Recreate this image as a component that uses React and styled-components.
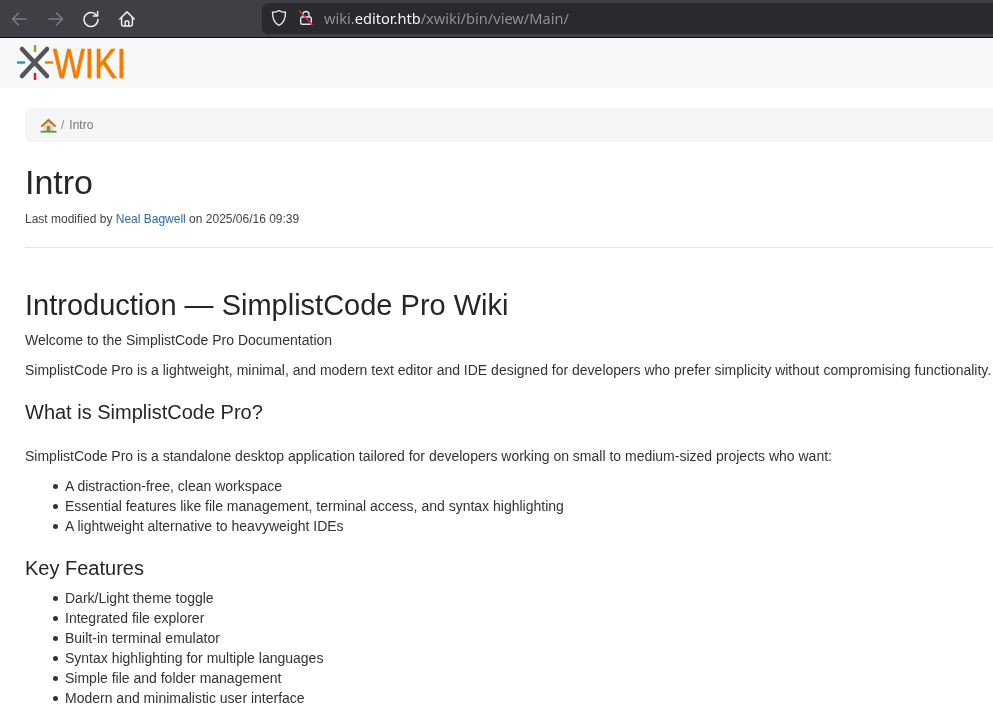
import React from "react";
import styled, { createGlobalStyle } from "styled-components";

const GlobalStyle = createGlobalStyle`
  html, body {
    margin: 0;
    padding: 0;
    height: 721px;
    overflow: hidden;
    background: #fff;
  }
  * { box-sizing: border-box; }
`;

const Page = styled.div`
  width: 993px;
  height: 721px;
  overflow: hidden;
  will-change: transform;
  font-family: "Liberation Sans", Arial, sans-serif;
  font-size: 14px;
  line-height: 20px;
  color: #333;
`;

const Toolbar = styled.div`
  height: 38px;
  display: flex;
  align-items: center;
  background: #3f3f46;
  border-bottom: 1px solid #0c0c0d;
  padding-left: 10px;
`;

const NavButton = styled.span`
  display: flex;
  width: 18px;
  height: 18px;
  margin-right: ${(p) => p.$gap}px;
  color: ${(p) => (p.$dim ? "#7b7b82" : "#f0f0f2")};
`;

const UrlBar = styled.div`
  height: 31px;
  flex: 1;
  margin-left: 7px;
  margin-top: -1px;
  display: flex;
  align-items: center;
  padding-left: 9px;
  background: #29292e;
  border-radius: 6px 0 0 6px;
`;

const UrlIcon = styled.span`
  display: flex;
  width: 16px;
  height: 18px;
  margin-right: ${(p) => p.$gap}px;
  color: #e4e4e8;
`;

const Url = styled.span`
  font-family: "Noto Sans", sans-serif;
  font-size: 14.6px;
  color: #8f8f96;
`;

const UrlHost = styled.span`
  color: #f3f3f5;
`;

const Header = styled.header`
  height: 50px;
  padding-left: 16px;
  background: #f8f8f8;
`;

const Content = styled.main`
  padding: 20px 0 0 25px;
`;

const Breadcrumb = styled.nav`
  height: 34px;
  display: flex;
  align-items: center;
  padding-left: 15px;
  font-size: 12px;
  color: #777;
  background: #f5f5f5;
  border-radius: 6px 0 0 6px;
`;

const Separator = styled.span`
  margin: 0 5px 0 4px;
  color: #8a8a8a;
`;

const PageTitle = styled.h1`
  margin: 20px 0 0;
  font-size: 34px;
  font-weight: 400;
  line-height: 40px;
  color: #262626;
`;

const Meta = styled.div`
  margin-top: 7px;
  font-size: 12px;
  line-height: 20px;
  color: #444;
`;

const MetaLink = styled.a`
  color: #2b6a99;
`;

const Rule = styled.hr`
  margin: 18px 0 0;
  border: 0;
  border-top: 1px solid #e5e5e5;
`;

const Heading1 = styled.h2`
  margin: 41px 0 0;
  font-size: 29px;
  font-weight: 400;
  line-height: 33px;
  color: #262626;
`;

const Heading2 = styled.h3`
  margin: ${(p) => p.$top}px 0 ${(p) => p.$bottom}px;
  font-size: 20px;
  font-weight: 400;
  line-height: 22px;
  color: #262626;
`;

const Paragraph = styled.p`
  margin: ${(p) => p.$top || 0}px 0 0;
  white-space: nowrap;
  color: #333;
`;

const List = styled.ul`
  margin: ${(p) => p.$top}px 0 0;
  padding-left: 40px;
  list-style: none;
`;

const Item = styled.li`
  display: flex;
  align-items: center;
  white-space: nowrap;

  &::before {
    content: "";
    flex: none;
    width: 5px;
    height: 5px;
    margin: 1px 7px 0 -12px;
    border-radius: 50%;
    background: #333;
  }
`;

const BackIcon = () => (
  <svg width="18" height="18" viewBox="0 0 18 18" fill="none" stroke="currentColor" strokeWidth="1.5" strokeLinecap="round" strokeLinejoin="round">
    <path d="M16 9H2.500M8.500 3 2.500 9l6 6" />
  </svg>
);

const ForwardIcon = () => (
  <svg width="18" height="18" viewBox="0 0 18 18" fill="none" stroke="currentColor" strokeWidth="1.5" strokeLinecap="round" strokeLinejoin="round">
    <path d="M2 9h13.500M9.500 3l6 6-6 6" />
  </svg>
);

const ReloadIcon = () => (
  <svg width="18" height="18" viewBox="0 0 18 18" fill="none" stroke="currentColor" strokeWidth="1.5" strokeLinecap="round" strokeLinejoin="round">
    <path d="M14.500 5.200A7 7 0 1 0 16 9.600" />
    <path d="M15.600 1.600v4.300h-4.300" />
  </svg>
);

const HomeIcon = () => (
  <svg width="18" height="18" viewBox="0 0 18 18" fill="none" stroke="currentColor" strokeWidth="1.5" strokeLinecap="round" strokeLinejoin="round">
    <path d="M1.800 9 9 1.900 16.200 9" />
    <path d="M3.600 7.600v7a1.400 1.400 0 0 0 1.400 1.400h8a1.400 1.400 0 0 0 1.400-1.400v-7" />
    <path d="M7.200 16v-4a1 1 0 0 1 1-1h1.600a1 1 0 0 1 1 1v4" />
  </svg>
);

const ShieldIcon = () => (
  <svg width="16" height="18" viewBox="0 0 16 18" fill="none" stroke="currentColor" strokeWidth="1.4" strokeLinejoin="round">
    <path d="M8 1.600c2 1.100 4.200 1.600 6.500 1.700 0 6-1.500 10.700-6.500 13.100C3 14 1.500 9.300 1.500 3.300 3.800 3.200 6 2.700 8 1.600Z" />
  </svg>
);

const InsecureLockIcon = () => (
  <svg width="16" height="18" viewBox="0 0 16 18" fill="none">
    <path d="M5 8V5.500a3 3 0 0 1 6 0V8" stroke="#e4e4e8" strokeWidth="1.400" />
    <rect x="2.700" y="8" width="10.600" height="7.300" rx="1.500" stroke="#e4e4e8" strokeWidth="1.400" />
    <path d="M1 1.500 14.500 16" stroke="#e22850" strokeWidth="1.400" />
  </svg>
);

const XWikiLogo = () => (
  <svg width="150" height="50" viewBox="0 0 150 50">
    <path d="M6 11 31 38M31 11 6 38" stroke="#555559" strokeWidth="4.500" strokeLinecap="round" />
    <path d="M19 7v7" stroke="#7ab51d" strokeWidth="2.500" />
    <path d="M19 35v7" stroke="#e5202e" strokeWidth="2.500" />
    <path d="M1 24.500h8" stroke="#1e9ad6" strokeWidth="2.500" />
    <path d="M29 24.500h8" stroke="#f57c00" strokeWidth="2.500" />
    <text x="37" y="40" textLength="73" lengthAdjust="spacingAndGlyphs" fontFamily="Liberation Sans, sans-serif" fontSize="43" fill="#f57c00" stroke="#f57c00" strokeWidth="0.7">WIKI</text>
  </svg>
);

const HouseIcon = () => (
  <svg width="17" height="15" viewBox="0 0 17 15">
    <path d="M3.500 7v6h10V7L8.500 2.500Z" fill="#f0dcb0" />
    <path d="M6.800 8h3.400v5H6.800Z" fill="#7f848c" />
    <path d="M.5 8.200 8.500.6l8 7.600-1.500 1L8.500 3.400 2 9.200Z" fill="#b5702a" />
    <path d="M.5 12.800h16v1.800H.5Z" fill="#4f9e36" />
  </svg>
);

const App = () => (
  <Page>
    <GlobalStyle />
    <Toolbar>
      <NavButton $dim $gap={19}><BackIcon /></NavButton>
      <NavButton $dim $gap={17}><ForwardIcon /></NavButton>
      <NavButton $gap={18}><ReloadIcon /></NavButton>
      <NavButton $gap={119}><HomeIcon /></NavButton>
      <UrlBar>
        <UrlIcon $gap={11}><ShieldIcon /></UrlIcon>
        <UrlIcon $gap={10}><InsecureLockIcon /></UrlIcon>
        <Url>wiki.<UrlHost>editor.htb</UrlHost>/xwiki/bin/view/Main/</Url>
      </UrlBar>
    </Toolbar>
    <Header>
      <XWikiLogo />
    </Header>
    <Content>
      <Breadcrumb>
        <HouseIcon />
        <Separator>/</Separator>
        Intro
      </Breadcrumb>
      <PageTitle>Intro</PageTitle>
      <Meta>
        Last modified by <MetaLink>Neal Bagwell</MetaLink> on 2025/06/16 09:39
      </Meta>
      <Rule />
      <Heading1>Introduction — SimplistCode Pro Wiki</Heading1>
      <Paragraph $top={8}>Welcome to the SimplistCode Pro Documentation</Paragraph>
      <Paragraph $top={10}>
        SimplistCode Pro is a lightweight, minimal, and modern text editor and IDE designed for developers who prefer simplicity without compromising functionality.
      </Paragraph>
      <Heading2 $top={21} $bottom={23}>What is SimplistCode Pro?</Heading2>
      <Paragraph>
        SimplistCode Pro is a standalone desktop application tailored for developers working on small to medium-sized projects who want:
      </Paragraph>
      <List $top={10}>
        <Item>A distraction-free, clean workspace</Item>
        <Item>Essential features like file management, terminal access, and syntax highlighting</Item>
        <Item>A lightweight alternative to heavyweight IDEs</Item>
      </List>
      <Heading2 $top={21} $bottom={9}>Key Features</Heading2>
      <List $top={0}>
        <Item>Dark/Light theme toggle</Item>
        <Item>Integrated file explorer</Item>
        <Item>Built-in terminal emulator</Item>
        <Item>Syntax highlighting for multiple languages</Item>
        <Item>Simple file and folder management</Item>
        <Item>Modern and minimalistic user interface</Item>
      </List>
    </Content>
  </Page>
);

export default App;
